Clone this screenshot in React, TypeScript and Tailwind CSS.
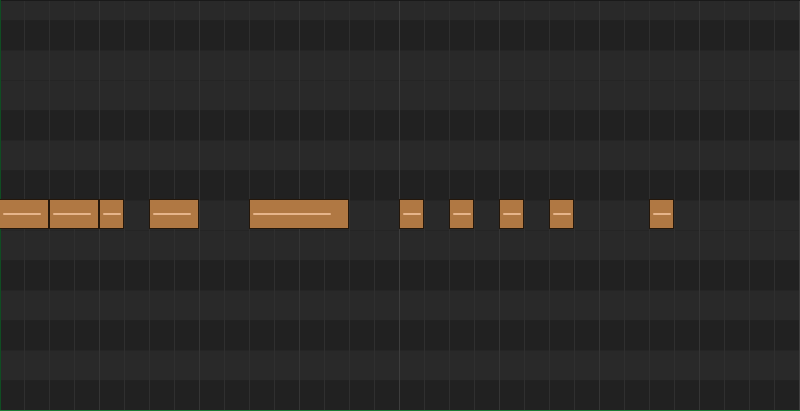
import React from "react";

// piano rows from top, true = black key (darker lane)
const rows = [
  false, true, false, false, true, false, true, false, false, true, false, true, false, true,
];

const notes = [
  { start: 0, len: 50 },
  { start: 50, len: 50 },
  { start: 100, len: 25 },
  { start: 150, len: 50 },
  { start: 250, len: 100 },
  { start: 400, len: 25 },
  { start: 450, len: 25 },
  { start: 500, len: 25 },
  { start: 550, len: 25 },
  { start: 650, len: 25 },
];

const columns = Array.from({ length: 32 }, (_, i) => i);

const App = () => {
  return (
    <div
      className="relative w-[800px] h-[411px] overflow-hidden bg-[#212121]"
      style={{ fontFamily: "'Liberation Sans', sans-serif" }}
    >
      <div className="flex flex-col -mt-[10px]">
        {rows.map((black, i) => (
          <div
            key={i}
            className={
              black
                ? "h-[30px] w-full bg-[#212121] border-t border-[#222222]"
                : "h-[30px] w-full bg-[#292929] border-t border-[#252525]"
            }
          />
        ))}
      </div>

      {/* beat / bar lines */}
      <div className="absolute inset-0 flex pointer-events-none">
        {columns.map((c) => {
          const n = c + 1;
          let cls = "w-[25px] h-full shrink-0 border-r border-[#2f2f2f]";
          if (n % 16 === 0) cls = "w-[25px] h-full shrink-0 border-r border-[#3d3d3d]";
          else if (n % 4 === 0) cls = "w-[25px] h-full shrink-0 border-r border-[#353535]";
          return <div key={c} className={cls} />;
        })}
      </div>

      <div className="absolute top-0 left-0 right-0 h-[1px] bg-[#1a1a1a]" />
      <div className="absolute top-0 left-0 bottom-0 w-[1px] bg-[#0f4d22]" />
      <div className="absolute left-0 right-0 bottom-0 h-[1px] bg-[#1b7b35]" />

      {notes.map((n) => (
        <div
          key={n.start}
          className="absolute top-[199px] h-[30px] bg-[#b07843] border border-[#24170b]"
          style={{ left: n.start - 1, width: n.len }}
        >
          <div
            className="absolute top-[13px] left-[3px] h-[2px] bg-[#e6b48a] rounded-[1px]"
            style={{ width: n.len * 0.8 - 2 }}
          />
        </div>
      ))}
    </div>
  );
};

export default App;
